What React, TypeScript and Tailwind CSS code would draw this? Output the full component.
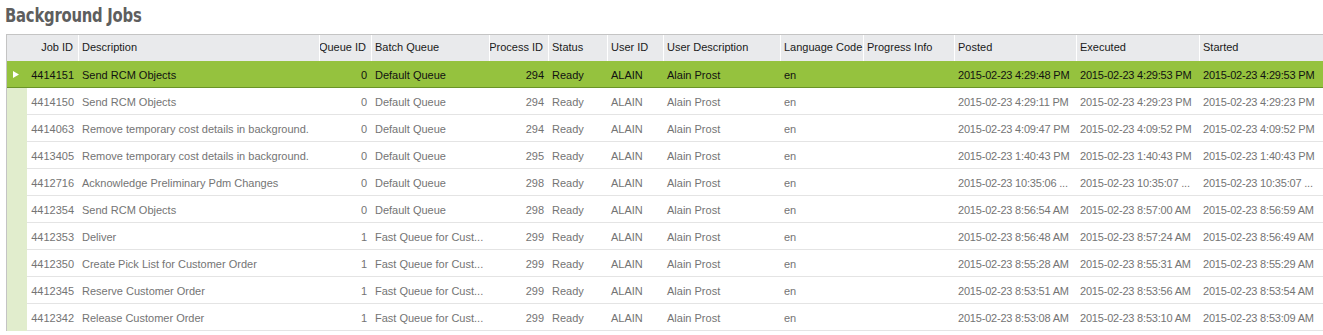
import React from "react";

type Col = {
  key: string;
  label: string;
  width: string;
  right?: boolean;
};

const columns: Col[] = [
  { key: "id", label: "Job ID", width: "w-[52px]", right: true },
  { key: "desc", label: "Description", width: "w-[241px]" },
  { key: "queue", label: "Queue ID", width: "w-[52px]", right: true },
  { key: "batch", label: "Batch Queue", width: "w-[118px]" },
  { key: "proc", label: "Process ID", width: "w-[59px]", right: true },
  { key: "status", label: "Status", width: "w-[59px]" },
  { key: "user", label: "User ID", width: "w-[56px]" },
  { key: "userDesc", label: "User Description", width: "w-[117px]" },
  { key: "lang", label: "Language Code", width: "w-[83px]" },
  { key: "progress", label: "Progress Info", width: "w-[91px]" },
  { key: "posted", label: "Posted", width: "w-[122px]" },
  { key: "executed", label: "Executed", width: "w-[123px]" },
  { key: "started", label: "Started", width: "w-[124px]" },
];

type Job = Record<string, string>;

const job = (
  id: string,
  desc: string,
  queue: string,
  batch: string,
  proc: string,
  posted: string,
  executed: string,
  started: string
): Job => ({
  id,
  desc,
  queue,
  batch,
  proc,
  status: "Ready",
  user: "ALAIN",
  userDesc: "Alain Prost",
  lang: "en",
  progress: "",
  posted,
  executed,
  started,
});

const DQ = "Default Queue";
const FQ = "Fast Queue for Cust...";

const jobs: Job[] = [
  job("4414151", "Send RCM Objects", "0", DQ, "294", "2015-02-23 4:29:48 PM", "2015-02-23 4:29:53 PM", "2015-02-23 4:29:53 PM"),
  job("4414150", "Send RCM Objects", "0", DQ, "294", "2015-02-23 4:29:11 PM", "2015-02-23 4:29:23 PM", "2015-02-23 4:29:23 PM"),
  job("4414063", "Remove temporary cost details in background.", "0", DQ, "294", "2015-02-23 4:09:47 PM", "2015-02-23 4:09:52 PM", "2015-02-23 4:09:52 PM"),
  job("4413405", "Remove temporary cost details in background.", "0", DQ, "295", "2015-02-23 1:40:43 PM", "2015-02-23 1:40:43 PM", "2015-02-23 1:40:43 PM"),
  job("4412716", "Acknowledge Preliminary Pdm Changes", "0", DQ, "298", "2015-02-23 10:35:06 ...", "2015-02-23 10:35:07 ...", "2015-02-23 10:35:07 ..."),
  job("4412354", "Send RCM Objects", "0", DQ, "298", "2015-02-23 8:56:54 AM", "2015-02-23 8:57:00 AM", "2015-02-23 8:56:59 AM"),
  job("4412353", "Deliver", "1", FQ, "299", "2015-02-23 8:56:48 AM", "2015-02-23 8:57:24 AM", "2015-02-23 8:56:49 AM"),
  job("4412350", "Create Pick List for Customer Order", "1", FQ, "299", "2015-02-23 8:55:28 AM", "2015-02-23 8:55:31 AM", "2015-02-23 8:55:29 AM"),
  job("4412345", "Reserve Customer Order", "1", FQ, "299", "2015-02-23 8:53:51 AM", "2015-02-23 8:53:56 AM", "2015-02-23 8:53:54 AM"),
  job("4412342", "Release Customer Order", "1", FQ, "299", "2015-02-23 8:53:08 AM", "2015-02-23 8:53:10 AM", "2015-02-23 8:53:09 AM"),
];

const isDate = (k: string) => k === "posted" || k === "executed" || k === "started";

export default function App() {
  return (
    <div className="w-[1323px] h-[335px] overflow-hidden bg-white font-['Liberation_Sans',Arial,sans-serif] text-[11px]">
      <div className="h-[34px] pl-[5px] pt-[3px]">
        <h1 className="inline-block origin-left scale-x-[0.78] font-['DejaVu_Sans',sans-serif] font-bold text-[19px] leading-[24px] text-[#5e5e5e] tracking-[-0.3px]">
          Background Jobs
        </h1>
      </div>

      <div className="ml-[6px] border-l border-t border-[#c4c4c4] w-max">
        {/* header */}
        <div className="flex h-[26px] bg-[#e9eaec] text-[#1a1a1a]">
          <div className="w-[20px] shrink-0" />
          {columns.map((c, i) => (
            <div
              key={c.key}
              className={`${c.width} shrink-0 flex items-center whitespace-nowrap overflow-hidden pb-[2px] ${
                c.right ? "justify-end pr-[5px]" : "pl-[3px]"
              } ${i < columns.length - 1 ? "border-r border-white" : ""}`}
            >
              {c.label}
            </div>
          ))}
        </div>

        {/* rows */}
        {jobs.map((j, r) => {
          const selected = r === 0;
          return (
            <div
              key={j.id}
              className={`flex h-[27px] ${
                selected ? "bg-[#95c23e] text-[#111]" : "bg-white text-[#747474]"
              }`}
            >
              <div
                className={`w-[20px] shrink-0 flex items-center justify-center pt-[1px] ${
                  selected ? "bg-[#95c23e] border-b border-[#6a9427]" : "bg-[#e1edcd]"
                }`}
              >
                {selected && (
                  <svg width="6" height="7" viewBox="0 0 6 7" className="ml-[-2px]">
                    <path d="M0 0 L6 3.5 L0 7 Z" fill="#ffffff" />
                  </svg>
                )}
              </div>
              <div
                className={`flex border-b ${
                  selected ? "border-[#6a9427]" : "border-[#e4e4e4]"
                }`}
              >
                {columns.map((c) => (
                  <div
                    key={c.key}
                    className={`${c.width} shrink-0 flex items-center whitespace-nowrap overflow-hidden pt-[2px] ${
                      c.right ? "justify-end pr-[5px]" : "pl-[3px]"
                    } ${isDate(c.key) ? "tracking-[-0.2px]" : ""}`}
                  >
                    {j[c.key]}
                  </div>
                ))}
              </div>
            </div>
          );
        })}
      </div>
    </div>
  );
}
